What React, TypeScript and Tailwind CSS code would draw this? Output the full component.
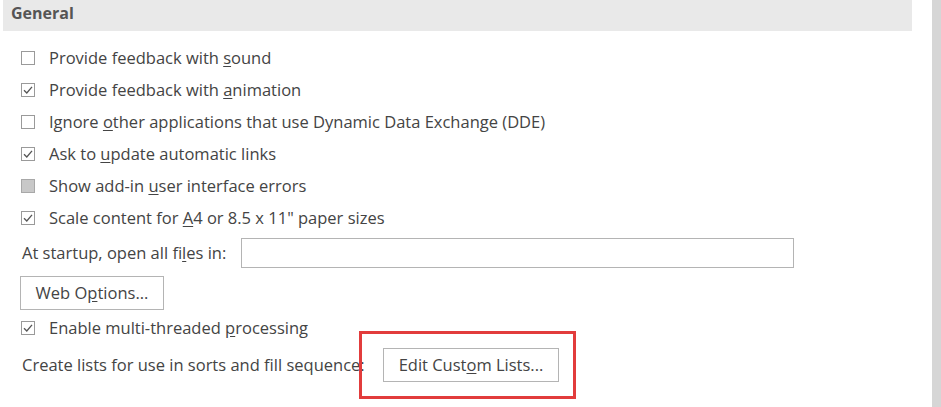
import type React from "react"

type Item = { before: string; key: string; after: string; state: "off" | "on" | "disabled" }

const items: Item[] = [
  { before: "Provide feedback with ", key: "s", after: "ound", state: "off" },
  { before: "Provide feedback with ", key: "a", after: "nimation", state: "on" },
  { before: "Ignore ", key: "o", after: "ther applications that use Dynamic Data Exchange (DDE)", state: "off" },
  { before: "Ask to ", key: "u", after: "pdate automatic links", state: "on" },
  { before: "Show add-in ", key: "u", after: "ser interface errors", state: "disabled" },
  { before: "Scale content for ", key: "A", after: "4 or 8.5 x 11\" paper sizes", state: "on" },
]

function Box({ state }: { state: Item["state"] }) {
  if (state === "disabled") {
    return <span className="w-[14px] h-[14px] border border-[#a8a8a8] bg-[#c8c8c8] shrink-0" />
  }
  return (
    <span className="w-[14px] h-[14px] border border-[#9a9a9a] bg-white shrink-0 flex items-center justify-center">
      {state === "on" && (
        <svg width="10" height="10" viewBox="0 0 10 10">
          <path d="M1 5.2 L3.8 8 L9 1.8" fill="none" stroke="#555" strokeWidth="1.3" />
        </svg>
      )}
    </span>
  )
}

function Label({ before, k, after }: { before: string; k: string; after: string }) {
  return (
    <span className="whitespace-nowrap">
      {before}
      <span className="underline underline-offset-2 decoration-1">{k}</span>
      {after}
    </span>
  )
}

function Button({ children, className }: { children: React.ReactNode; className: string }) {
  return (
    <div className={"border border-[#b4b4b4] bg-white flex items-center justify-center shrink-0 " + className}>
      {children}
    </div>
  )
}

export default function App() {
  return (
    <div
      className="w-[941px] h-[407px] bg-white flex text-[#444] text-[16.5px] overflow-hidden relative"
      style={{ fontFamily: '"Open Sans", "Noto Sans", sans-serif' }}
    >
      <div className="flex-1 flex flex-col">
        {/* Section header */}
        <div className="ml-[3px] w-[909px] h-[31px] bg-[#e9e9e9] flex items-center pl-[8px] pb-[5px]">
          <span className="font-bold text-[#555] text-[16px]">General</span>
        </div>

        <div className="flex flex-col pt-[11px]">
          {items.map((it, i) => (
            <div key={i} className="h-8 flex items-center pl-[21px] gap-[14px]">
              <Box state={it.state} />
              <Label before={it.before} k={it.key} after={it.after} />
            </div>
          ))}

          <div className="h-[38px] flex items-center pl-[22px]">
            <span className="w-[219px] whitespace-nowrap">
              At startup, open all fi<span className="underline underline-offset-2">l</span>es in:
            </span>
            <div className="w-[553px] h-[30px] border border-[#b4b4b4] bg-white" />
          </div>

          <div className="pl-[20px] pt-[4px]">
            <Button className="w-[144px] h-[34px]">
              <span>
                Web O<span className="underline underline-offset-2">p</span>tions...
              </span>
            </Button>
          </div>

          <div className="h-8 flex items-center pl-[21px] gap-[14px] mt-[2px]">
            <Box state="on" />
            <span className="whitespace-nowrap">
              Enable multi-threaded <span className="underline underline-offset-2">p</span>rocessing
            </span>
          </div>

          <div className="flex items-center pl-[22px] mt-[4px] h-[34px]">
            <span className="w-[361px] whitespace-nowrap">Create lists for use in sorts and fill sequence:</span>
            <Button className="w-[176px] h-[34px]">
              <span>
                Edit Cust<span className="underline underline-offset-2">o</span>m Lists...
              </span>
            </Button>
          </div>
        </div>
      </div>

      {/* Scrollbar track */}
      <div className="w-[9px] bg-[#d6d6d6]" />

      {/* Annotation highlight */}
      <div className="absolute left-[359px] top-[331px] w-[217px] h-[68px] border-[3px] border-[#e23c3c]" />
    </div>
  )
}
